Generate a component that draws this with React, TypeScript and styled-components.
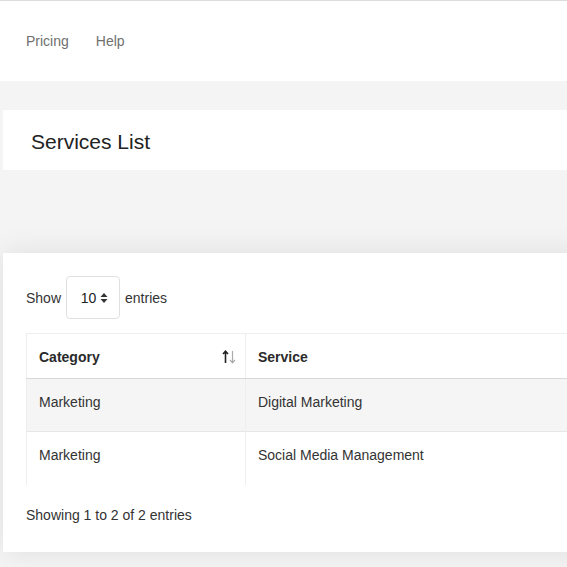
import React from "react";
import styled, { createGlobalStyle } from "styled-components";

const GlobalStyle = createGlobalStyle`
  html, body {
    margin: 0;
    padding: 0;
    background: #f4f4f4;
    overflow: hidden;
  }
  body {
    font-family: "Liberation Sans", Arial, sans-serif;
    color: #333;
  }
`;

const Page = styled.div`
  width: 900px;
  min-height: 567px;
`;

const Navbar = styled.nav`
  height: 80px;
  background: #fff;
  border-top: 1px solid #dcdcdc;
  display: flex;
  align-items: center;
  padding-left: 26px;
  gap: 27px;
`;

const NavLink = styled.a`
  font-size: 14px;
  color: #707070;
  text-decoration: none;
  margin-top: -1px;
`;

const Content = styled.main`
  padding: 29px 0 0 3px;
`;

const HeaderCard = styled.section`
  height: 60px;
  background: #fff;
  display: flex;
  align-items: center;
  padding: 3px 0 0 28px;
  box-sizing: border-box;
`;

const Title = styled.h1`
  margin: 0;
  font-size: 21px;
  font-weight: 400;
  color: #222;
`;

const Card = styled.section`
  margin-top: 83px;
  height: 299px;
  background: #fff;
  box-shadow: 0 0 28px rgba(0, 0, 0, 0.09);
  padding: 23px 0 0 23px;
  box-sizing: border-box;
`;

const LengthRow = styled.label`
  display: flex;
  align-items: center;
  gap: 5px;
  font-size: 14px;
  color: #333;
`;

const SelectBox = styled.div`
  width: 54px;
  height: 43px;
  border: 1px solid #e0e0e0;
  border-radius: 4px;
  display: flex;
  align-items: center;
  justify-content: center;
  gap: 4px;
  font-size: 14px;
  color: #222;
  padding-left: 3px;
  box-sizing: border-box;
`;

const Table = styled.table`
  margin-top: 14px;
  width: 620px;
  border-collapse: collapse;
  font-size: 14px;
`;

const HeadCell = styled.th<{ $w?: number }>`
  height: 45px;
  text-align: left;
  font-weight: 700;
  color: #2a2a2a;
  padding: 2px 8px 0 12px;
  border-top: 1px solid #eee;
  border-bottom: 1px solid #d8d8d8;
  border-left: 1px solid #eee;
  width: ${(p) => (p.$w ? `${p.$w}px` : "auto")};
  box-sizing: border-box;
`;

const HeadInner = styled.div`
  display: flex;
  align-items: center;
  justify-content: space-between;
`;

const Row = styled.tr<{ $striped?: boolean }>`
  background: ${(p) => (p.$striped ? "#f5f5f5" : "#fff")};
`;

const Cell = styled.td`
  height: 53px;
  padding: 0 12px 7px;
  box-sizing: border-box;
  color: #333;
  border-left: 1px solid #eee;
  border-top: 1px solid #e6e6e6;
`;

const Info = styled.div`
  margin-top: 22px;
  font-size: 14px;
  color: #333;
`;

const SortIcon = () => (
  <svg width="16" height="16" viewBox="0 0 16 16" fill="none">
    <path d="M4.5 14V2.5M2 5l2.5-2.8L7 5" stroke="#222" strokeWidth="1.6" />
    <path d="M11.5 2v11.5M9 11l2.5 2.8L14 11" stroke="#aaa" strokeWidth="1.2" />
  </svg>
);

const CaretSort = () => (
  <svg width="8" height="12" viewBox="0 0 8 12">
    <path d="M4 1L7.5 5H0.5Z" fill="#333" />
    <path d="M4 11L7.5 7H0.5Z" fill="#333" />
  </svg>
);

const services = [
  { category: "Marketing", service: "Digital Marketing" },
  { category: "Marketing", service: "Social Media Management" },
];

const App: React.FunctionComponent = () => (
  <Page>
    <GlobalStyle />
    <Navbar>
      <NavLink href="#">Pricing</NavLink>
      <NavLink href="#">Help</NavLink>
    </Navbar>
    <Content>
      <HeaderCard>
        <Title>Services List</Title>
      </HeaderCard>
      <Card>
        <LengthRow>
          Show
          <SelectBox>
            10 <CaretSort />
          </SelectBox>
          entries
        </LengthRow>
        <Table>
          <thead>
            <tr>
              <HeadCell $w={219}>
                <HeadInner>
                  Category
                  <SortIcon />
                </HeadInner>
              </HeadCell>
              <HeadCell>Service</HeadCell>
            </tr>
          </thead>
          <tbody>
            {services.map((s, i) => (
              <Row key={s.service} $striped={i % 2 === 0}>
                <Cell>{s.category}</Cell>
                <Cell>{s.service}</Cell>
              </Row>
            ))}
          </tbody>
        </Table>
        <Info>Showing 1 to 2 of 2 entries</Info>
      </Card>
    </Content>
  </Page>
);

export default App;
